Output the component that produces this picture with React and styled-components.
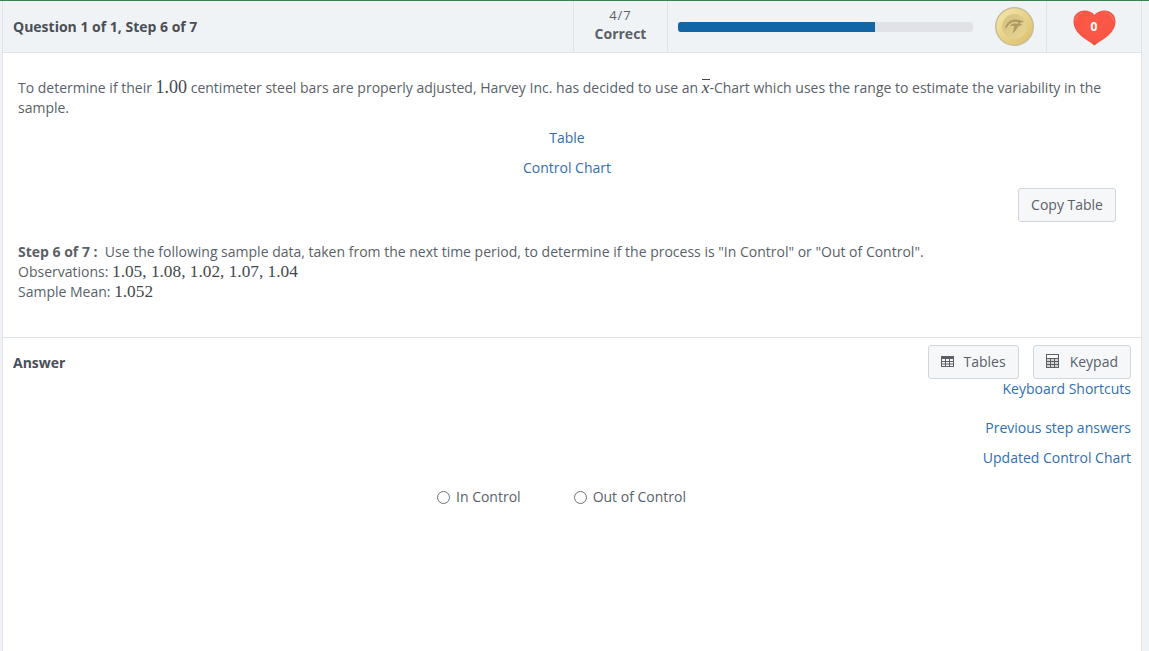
import React from "react";
import styled, { createGlobalStyle } from "styled-components";

const GlobalStyle = createGlobalStyle`
  html, body {
    margin: 0;
    padding: 0;
    height: 100%;
    overflow: hidden;
    background: #f0f3f6;
    font-family: "Open Sans", sans-serif;
    font-size: 14px;
    color: #5a5f69;
  }
`;

function TableIcon() {
  return (
    <svg width="13" height="11" viewBox="0 0 13 11" fill="none">
      <rect x="0" y="0" width="13" height="3" fill="#5a5f69" />
      <path
        d="M.5 0v11M12.500 0v11M4.500 3v8M8.500 3v8M0 5.500h13M0 8h13M0 10.500h13"
        stroke="#5a5f69"
        strokeWidth="1"
      />
    </svg>
  );
}

function KeypadIcon() {
  return (
    <svg width="13" height="14" viewBox="0 0 13 14" fill="none">
      <rect x=".5" y=".5" width="12" height="13" fill="#d8d4ce" stroke="#5a5f69" />
      <rect x="1" y="1" width="11" height="3" fill="#fff" />
      <path d="M1 4.500h11M1 7.500h11M1 10.500h11M4.500 4v9M8.500 4v9" stroke="#5a5f69" />
    </svg>
  );
}

function Coin() {
  return (
    <svg width="39" height="39" viewBox="0 0 39 39">
      <defs>
        <linearGradient id="coinRim" x1="0" y1="0" x2="1" y2="1">
          <stop offset="0" stopColor="#f5e8ae" />
          <stop offset="1" stopColor="#dcbd66" />
        </linearGradient>
        <linearGradient id="coinCenter" x1="0" y1="0" x2="1" y2="1">
          <stop offset="0" stopColor="#d3c083" />
          <stop offset="1" stopColor="#ead693" />
        </linearGradient>
      </defs>
      <circle cx="19.500" cy="19.500" r="19.500" fill="#c9bd97" />
      <circle cx="19.500" cy="19.500" r="18" fill="url(#coinRim)" />
      <circle cx="19.500" cy="19.500" r="12.500" fill="url(#coinCenter)" />
      <path
        d="M10 22c.5-5 4-9 10-9.500 3.500-.3 6.500.5 9 2.500-2 .2-3.500.8-4.500 1.800 1 .4 2 .5 3 .4-1.500 1.300-3 1.800-4.200 2-1.500 2.500-3 5-5.800 7.300.8-2.500 1.500-5 1.500-7.500-3.500-.5-6.500 0-9 3z"
        fill="#b09b63"
      />
      <path d="M13 20c2-3 6-5 10-4" stroke="#e6d394" strokeWidth="1.300" fill="none" />
    </svg>
  );
}

function Heart() {
  return (
    <svg width="43" height="36" viewBox="0 0 43 36">
      <defs>
        <radialGradient id="heartFill" cx="0.5" cy="0.4" r="0.6">
          <stop offset="0" stopColor="#fd5a48" />
          <stop offset="0.8" stopColor="#f95546" />
          <stop offset="1" stopColor="#e84236" />
        </radialGradient>
      </defs>
      <path
        d="M21.500 35.500C17 31 .5 25 .5 11.500 .5 4.500 5.500 .5 11.500 .5c4 0 8 1.500 10 4.500 2-3 6-4.500 10-4.500 6 0 11 4 11 11C42.500 25 26 31 21.500 35.500z"
        fill="url(#heartFill)"
      />
      <path
        d="M2.500 11c0-4.500 4-8 8.500-8M40.500 11c0-4.500-4-8-8.500-8"
        stroke="#ff8a7a"
        strokeOpacity="0.5"
        strokeWidth="1.200"
        fill="none"
      />
    </svg>
  );
}

export default function App() {
  return (
    <>
      <GlobalStyle />
      <TopLine />
      <Card>
        <Header>
          <Title>Question 1 of 1, Step 6 of 7</Title>
          <Score>
            <span>4/7</span>
            <strong>Correct</strong>
          </Score>
          <ProgressCell>
            <Track>
              <Fill style={{ width: `${(197 / 295) * 100}%` }} />
            </Track>
            <Coin />
          </ProgressCell>
          <Lives>
            <HeartWrap>
              <Heart />
              <HeartCount>0</HeartCount>
            </HeartWrap>
          </Lives>
        </Header>

        <Question>
          <Paragraph>
            To determine if their <Math>1.00</Math> centimeter steel bars are properly adjusted,
            Harvey Inc. has decided to use an <XBar>x</XBar>-Chart which uses the range to estimate
            the variability in the sample.
          </Paragraph>
          <CenterLink>Table</CenterLink>
          <CenterLink>Control Chart</CenterLink>
          <CopyRow>
            <Button>Copy Table</Button>
          </CopyRow>
          <Step>
            <div>
              <b>Step 6 of 7 :</b>&nbsp; Use the following sample data, taken from the next time
              period, to determine if the process is "In Control" or "Out of Control".
            </div>
            <div>
              Observations: <Math $small>1.05, 1.08, 1.02, 1.07, 1.04</Math>
            </div>
            <div>
              Sample Mean: <Math $small>1.052</Math>
            </div>
          </Step>
        </Question>

        <Answer>
          <AnswerTop>
            <AnswerLabel>Answer</AnswerLabel>
            <Tools>
              <Buttons>
                <Button>
                  <TableIcon />
                  Tables
                </Button>
                <Button $gap={11}>
                  <KeypadIcon />
                  Keypad
                </Button>
              </Buttons>
              <ShortcutLink>Keyboard Shortcuts</ShortcutLink>
              <SideLink>Previous step answers</SideLink>
              <SideLink>Updated Control Chart</SideLink>
            </Tools>
          </AnswerTop>
          <Options>
            <Option>
              <Radio />
              In Control
            </Option>
            <Option>
              <Radio />
              Out of Control
            </Option>
          </Options>
        </Answer>
      </Card>
    </>
  );
}

const TopLine = styled.div`
  height: 1px;
  background: #3f7d4f;
`;

const Card = styled.div`
  box-sizing: border-box;
  width: 1140px;
  height: 650px;
  margin-left: 2px;
  background: #fff;
  border-left: 1px solid #dfe2e6;
  border-right: 1px solid #dfe2e6;
`;

const Header = styled.div`
  box-sizing: border-box;
  display: flex;
  height: 52px;
  background: #f0f3f6;
  border-bottom: 1px solid #dfe2e6;
`;

const Title = styled.div`
  flex: 1;
  padding-left: 10px;
  line-height: 51px;
  font-weight: 700;
  color: #4a4f57;
`;

const Score = styled.div`
  box-sizing: border-box;
  display: flex;
  flex-direction: column;
  align-items: center;
  width: 95px;
  padding-top: 4px;
  border-left: 1px solid #dfe2e6;
  border-right: 1px solid #dfe2e6;
  font-size: 13px;
  line-height: 20px;
  letter-spacing: 1px;

  strong {
    margin-top: -1px;
    font-size: 14px;
    letter-spacing: 0;
  }
`;

const ProgressCell = styled.div`
  box-sizing: border-box;
  display: flex;
  align-items: center;
  width: 379px;
  padding-left: 10px;
  border-right: 1px solid #dfe2e6;
`;

const Track = styled.div`
  width: 295px;
  height: 10px;
  margin-right: 22px;
  border-radius: 3px;
  background: #e0e2e7;
  overflow: hidden;
`;

const Fill = styled.div`
  height: 100%;
  background: #1266a6;
`;

const Lives = styled.div`
  width: 94px;
  display: flex;
  align-items: center;
  justify-content: center;
`;

const HeartWrap = styled.div`
  position: relative;
  width: 43px;
  height: 36px;
  margin-top: 2px;
`;

const HeartCount = styled.span`
  position: absolute;
  left: 0;
  right: 0;
  top: 9px;
  text-align: center;
  font-size: 12px;
  line-height: 16px;
  font-weight: 700;
  color: #fff;
`;

const Question = styled.div`
  box-sizing: border-box;
  height: 285px;
  padding: 25px 15px 0;
  border-bottom: 1px solid #dfe2e6;
`;

const Paragraph = styled.p`
  margin: 0 0 10px;
  line-height: 20px;
`;

const Math = styled.span`
  font-family: "Liberation Serif", serif;
  font-size: ${(props) => (props.$small ? "17.300px" : "18px")};
  line-height: 1;
  color: #44474d;
`;

const XBar = styled.span`
  position: relative;
  font-family: "Liberation Serif", serif;
  font-style: italic;
  font-size: 17px;
  line-height: 1;
  color: #44474d;

  &::before {
    content: "";
    position: absolute;
    left: 0;
    right: -1px;
    top: 1px;
    height: 1px;
    background: #44474d;
  }
`;

const CenterLink = styled.div`
  height: 30px;
  padding-right: 10px;
  line-height: 20px;
  text-align: center;
  color: #2f6fb0;
`;

const CopyRow = styled.div`
  display: flex;
  justify-content: flex-end;
  padding-right: 10px;
`;

const Button = styled.div`
  box-sizing: border-box;
  display: inline-flex;
  align-items: center;
  gap: ${(props) => props.$gap || 10}px;
  height: 34px;
  padding: 0 12px 2px;
  background: #f6f7f9;
  border: 1px solid #cfd6dc;
  border-radius: 3px;
  white-space: nowrap;
`;

const Step = styled.div`
  margin-top: 20px;
  line-height: 20px;
`;

const Answer = styled.div`
  padding: 7px 10px 0;
`;

const AnswerTop = styled.div`
  display: flex;
  justify-content: space-between;
`;

const AnswerLabel = styled.div`
  padding-top: 8px;
  line-height: 20px;
  font-weight: 700;
  color: #4a4f57;
`;

const Tools = styled.div`
  display: flex;
  flex-direction: column;
  align-items: flex-end;
`;

const Buttons = styled.div`
  display: flex;
  gap: 14px;
`;

const ShortcutLink = styled.div`
  margin-bottom: 19px;
  line-height: 20px;
  color: #2f6fb0;
`;

const SideLink = styled.div`
  height: 30px;
  line-height: 20px;
  color: #2f6fb0;
`;

const Options = styled.div`
  display: flex;
  gap: 53px;
  margin-top: 9px;
  padding-left: 424px;
`;

const Option = styled.div`
  display: flex;
  align-items: center;
  gap: 6px;
  line-height: 20px;
`;

const Radio = styled.span`
  box-sizing: border-box;
  width: 13px;
  height: 13px;
  background: #fff;
  border: 1px solid #6b6f75;
  border-radius: 50%;
`;
